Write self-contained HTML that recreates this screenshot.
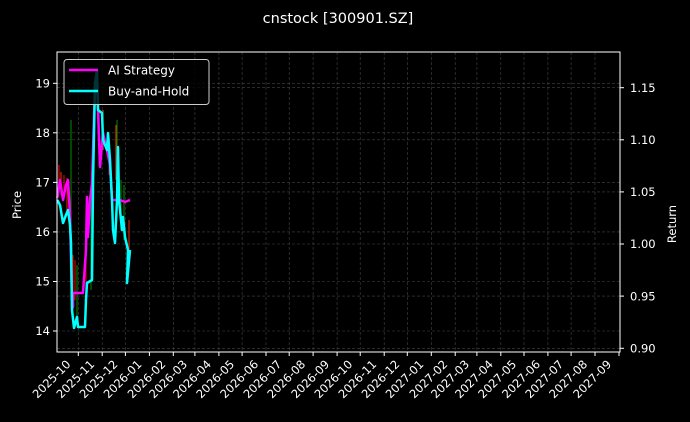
<!DOCTYPE html>
<html><head><meta charset="utf-8"><style>
html,body{margin:0;padding:0;background:#000;}
svg{display:block;font-family:"DejaVu Sans","Liberation Sans",sans-serif;}
</style></head><body>
<svg width="690" height="422" viewBox="0 0 690 422" xmlns="http://www.w3.org/2000/svg">
<rect width="690" height="422" fill="#000"/>
<text x="338" y="23" fill="#fff" font-size="14.5" text-anchor="middle">cnstock [300901.SZ]</text>
<g stroke="#444" stroke-width="0.6" stroke-dasharray="3,2">
<line x1="57" x2="620" y1="83.3" y2="83.3"/><line x1="57" x2="620" y1="132.8" y2="132.8"/><line x1="57" x2="620" y1="182.4" y2="182.4"/><line x1="57" x2="620" y1="231.9" y2="231.9"/><line x1="57" x2="620" y1="281.5" y2="281.5"/><line x1="57" x2="620" y1="331" y2="331"/>
<line x1="57" x2="620" y1="87.7" y2="87.7"/><line x1="57" x2="620" y1="139.8" y2="139.8"/><line x1="57" x2="620" y1="191.9" y2="191.9"/><line x1="57" x2="620" y1="244" y2="244"/><line x1="57" x2="620" y1="296.1" y2="296.1"/><line x1="57" x2="620" y1="348.3" y2="348.3"/>
<line x1="78.3" x2="78.3" y1="52" y2="352"/><line x1="102.2" x2="102.2" y1="52" y2="352"/><line x1="125.4" x2="125.4" y1="52" y2="352"/><line x1="149.4" x2="149.4" y1="52" y2="352"/><line x1="173.3" x2="173.3" y1="52" y2="352"/><line x1="194.9" x2="194.9" y1="52" y2="352"/><line x1="218.9" x2="218.9" y1="52" y2="352"/><line x1="242.1" x2="242.1" y1="52" y2="352"/><line x1="266" x2="266" y1="52" y2="352"/><line x1="289.2" x2="289.2" y1="52" y2="352"/><line x1="313.1" x2="313.1" y1="52" y2="352"/><line x1="337.1" x2="337.1" y1="52" y2="352"/><line x1="360.2" x2="360.2" y1="52" y2="352"/><line x1="384.2" x2="384.2" y1="52" y2="352"/><line x1="407.3" x2="407.3" y1="52" y2="352"/><line x1="431.3" x2="431.3" y1="52" y2="352"/><line x1="455.2" x2="455.2" y1="52" y2="352"/><line x1="476.9" x2="476.9" y1="52" y2="352"/><line x1="500.8" x2="500.8" y1="52" y2="352"/><line x1="524" x2="524" y1="52" y2="352"/><line x1="547.9" x2="547.9" y1="52" y2="352"/><line x1="571.1" x2="571.1" y1="52" y2="352"/><line x1="595" x2="595" y1="52" y2="352"/>
</g>
<g stroke-width="1.2">
<line x1="59" x2="59" y1="165" y2="190" stroke="#d00"/><line x1="61" x2="61" y1="172" y2="195" stroke="#c30"/><line x1="64" x2="64" y1="175" y2="200" stroke="#d00"/><line x1="67" x2="67" y1="178" y2="215" stroke="#c20"/>
<line x1="71" x2="71" y1="120" y2="300" stroke="#070"/><line x1="73" x2="73" y1="255" y2="310" stroke="#c00"/><line x1="75" x2="75" y1="260" y2="300" stroke="#c00"/><line x1="77" x2="77" y1="265" y2="320" stroke="#070"/>
<line x1="86" x2="86" y1="230" y2="290" stroke="#c00"/><line x1="91" x2="91" y1="190" y2="290" stroke="#070"/>
<line x1="99" x2="99" y1="110" y2="140" stroke="#c40"/><line x1="103" x2="103" y1="110" y2="150" stroke="#c40"/><line x1="109" x2="109" y1="140" y2="175" stroke="#c00"/><line x1="117" x2="117" y1="120" y2="210" stroke="#070"/><line x1="116" x2="116" y1="125" y2="180" stroke="#c40"/><line x1="121" x2="121" y1="180" y2="230" stroke="#070"/><line x1="124" x2="124" y1="185" y2="240" stroke="#070"/><line x1="129" x2="129" y1="220" y2="250" stroke="#c20"/>
</g>
<polyline fill="none" stroke="#f0f" stroke-width="2.5" stroke-linejoin="round" points="57.3,198 60,180 63,200 66,185 68,180 70,215 72,300 73,307 73,293 83,293 86,250 87,197 88,237 90,200 92,183 95,85 97,72 98,110 100,167 103,133 107,150 110,165 112,200 120,200 125,202 130,200"/>
<polyline fill="none" stroke="#0ff" stroke-width="2.5" stroke-linejoin="round" points="57.3,200 60,205 63,223 66,215 68,210 70,225 71,243 72,310 74,328 77,317 78,327 85,327 86,300 87,283 92,280 93,183 95,83 97,70 98,110 102,113 103,140 107,150 108,133 110,160 112,200 113,230 115,243 117,200 118,147 119,200 122,230 123,217 125,237 128,250 127,283 130,250"/>
<rect x="57" y="52" width="563" height="300" fill="none" stroke="#fff" stroke-width="1"/>
<rect x="64" y="59.5" width="145" height="45" rx="3" fill="#000" fill-opacity="0.8" stroke="#ccc" stroke-width="1"/>
<line x1="69" x2="98" y1="70" y2="70" stroke="#f0f" stroke-width="2.5"/>
<line x1="69" x2="98" y1="91" y2="91" stroke="#0ff" stroke-width="2.5"/>
<text x="108" y="74.5" fill="#fff" font-size="12">AI Strategy</text>
<text x="108" y="95.5" fill="#fff" font-size="12">Buy-and-Hold</text>
<g stroke="#fff" stroke-width="1">
<line x1="53" x2="57" y1="83.3" y2="83.3"/><line x1="53" x2="57" y1="132.8" y2="132.8"/><line x1="53" x2="57" y1="182.4" y2="182.4"/><line x1="53" x2="57" y1="231.9" y2="231.9"/><line x1="53" x2="57" y1="281.5" y2="281.5"/><line x1="53" x2="57" y1="331" y2="331"/>
<line x1="620" x2="624" y1="87.7" y2="87.7"/><line x1="620" x2="624" y1="139.8" y2="139.8"/><line x1="620" x2="624" y1="191.9" y2="191.9"/><line x1="620" x2="624" y1="244" y2="244"/><line x1="620" x2="624" y1="296.1" y2="296.1"/><line x1="620" x2="624" y1="348.3" y2="348.3"/>
</g>
<g fill="#fff" font-size="11.5" text-anchor="end">
<text x="50" y="87.5">19</text><text x="50" y="137">18</text><text x="50" y="186.6">17</text><text x="50" y="236.1">16</text><text x="50" y="285.7">15</text><text x="50" y="335.2">14</text>
</g>
<g fill="#fff" font-size="11.5">
<text x="630" y="91.9">1.15</text><text x="630" y="144">1.10</text><text x="630" y="196.1">1.05</text><text x="630" y="248.2">1.00</text><text x="630" y="300.3">0.95</text><text x="630" y="352.5">0.90</text>
</g>
<text transform="translate(21,205) rotate(-90)" fill="#fff" font-size="11.5" text-anchor="middle">Price</text>
<text transform="translate(676,224) rotate(-90)" fill="#fff" font-size="11.5" text-anchor="middle">Return</text>
<g stroke="#fff" stroke-width="1">
<line x1="78.3" x2="78.3" y1="352" y2="356"/><line x1="102.2" x2="102.2" y1="352" y2="356"/><line x1="125.4" x2="125.4" y1="352" y2="356"/><line x1="149.4" x2="149.4" y1="352" y2="356"/><line x1="173.3" x2="173.3" y1="352" y2="356"/><line x1="194.9" x2="194.9" y1="352" y2="356"/><line x1="218.9" x2="218.9" y1="352" y2="356"/><line x1="242.1" x2="242.1" y1="352" y2="356"/><line x1="266" x2="266" y1="352" y2="356"/><line x1="289.2" x2="289.2" y1="352" y2="356"/><line x1="313.1" x2="313.1" y1="352" y2="356"/><line x1="337.1" x2="337.1" y1="352" y2="356"/><line x1="360.2" x2="360.2" y1="352" y2="356"/><line x1="384.2" x2="384.2" y1="352" y2="356"/><line x1="407.3" x2="407.3" y1="352" y2="356"/><line x1="431.3" x2="431.3" y1="352" y2="356"/><line x1="455.2" x2="455.2" y1="352" y2="356"/><line x1="476.9" x2="476.9" y1="352" y2="356"/><line x1="500.8" x2="500.8" y1="352" y2="356"/><line x1="524" x2="524" y1="352" y2="356"/><line x1="547.9" x2="547.9" y1="352" y2="356"/><line x1="571.1" x2="571.1" y1="352" y2="356"/><line x1="595" x2="595" y1="352" y2="356"/><line x1="619" x2="619" y1="352" y2="356"/>
</g>
<g fill="#fff" font-size="11.5" text-anchor="end">
<text transform="translate(71.3,365) rotate(-45)">2025-10</text>
<text transform="translate(95.2,365) rotate(-45)">2025-11</text>
<text transform="translate(118.4,365) rotate(-45)">2025-12</text>
<text transform="translate(142.4,365) rotate(-45)">2026-01</text>
<text transform="translate(166.3,365) rotate(-45)">2026-02</text>
<text transform="translate(187.9,365) rotate(-45)">2026-03</text>
<text transform="translate(211.9,365) rotate(-45)">2026-04</text>
<text transform="translate(235.1,365) rotate(-45)">2026-05</text>
<text transform="translate(259,365) rotate(-45)">2026-06</text>
<text transform="translate(282.2,365) rotate(-45)">2026-07</text>
<text transform="translate(306.1,365) rotate(-45)">2026-08</text>
<text transform="translate(330.1,365) rotate(-45)">2026-09</text>
<text transform="translate(353.2,365) rotate(-45)">2026-10</text>
<text transform="translate(377.2,365) rotate(-45)">2026-11</text>
<text transform="translate(400.3,365) rotate(-45)">2026-12</text>
<text transform="translate(424.3,365) rotate(-45)">2027-01</text>
<text transform="translate(448.2,365) rotate(-45)">2027-02</text>
<text transform="translate(469.9,365) rotate(-45)">2027-03</text>
<text transform="translate(493.8,365) rotate(-45)">2027-04</text>
<text transform="translate(517,365) rotate(-45)">2027-05</text>
<text transform="translate(540.9,365) rotate(-45)">2027-06</text>
<text transform="translate(564.1,365) rotate(-45)">2027-07</text>
<text transform="translate(588,365) rotate(-45)">2027-08</text>
<text transform="translate(612,365) rotate(-45)">2027-09</text>
</g>
</svg>
</body></html>
